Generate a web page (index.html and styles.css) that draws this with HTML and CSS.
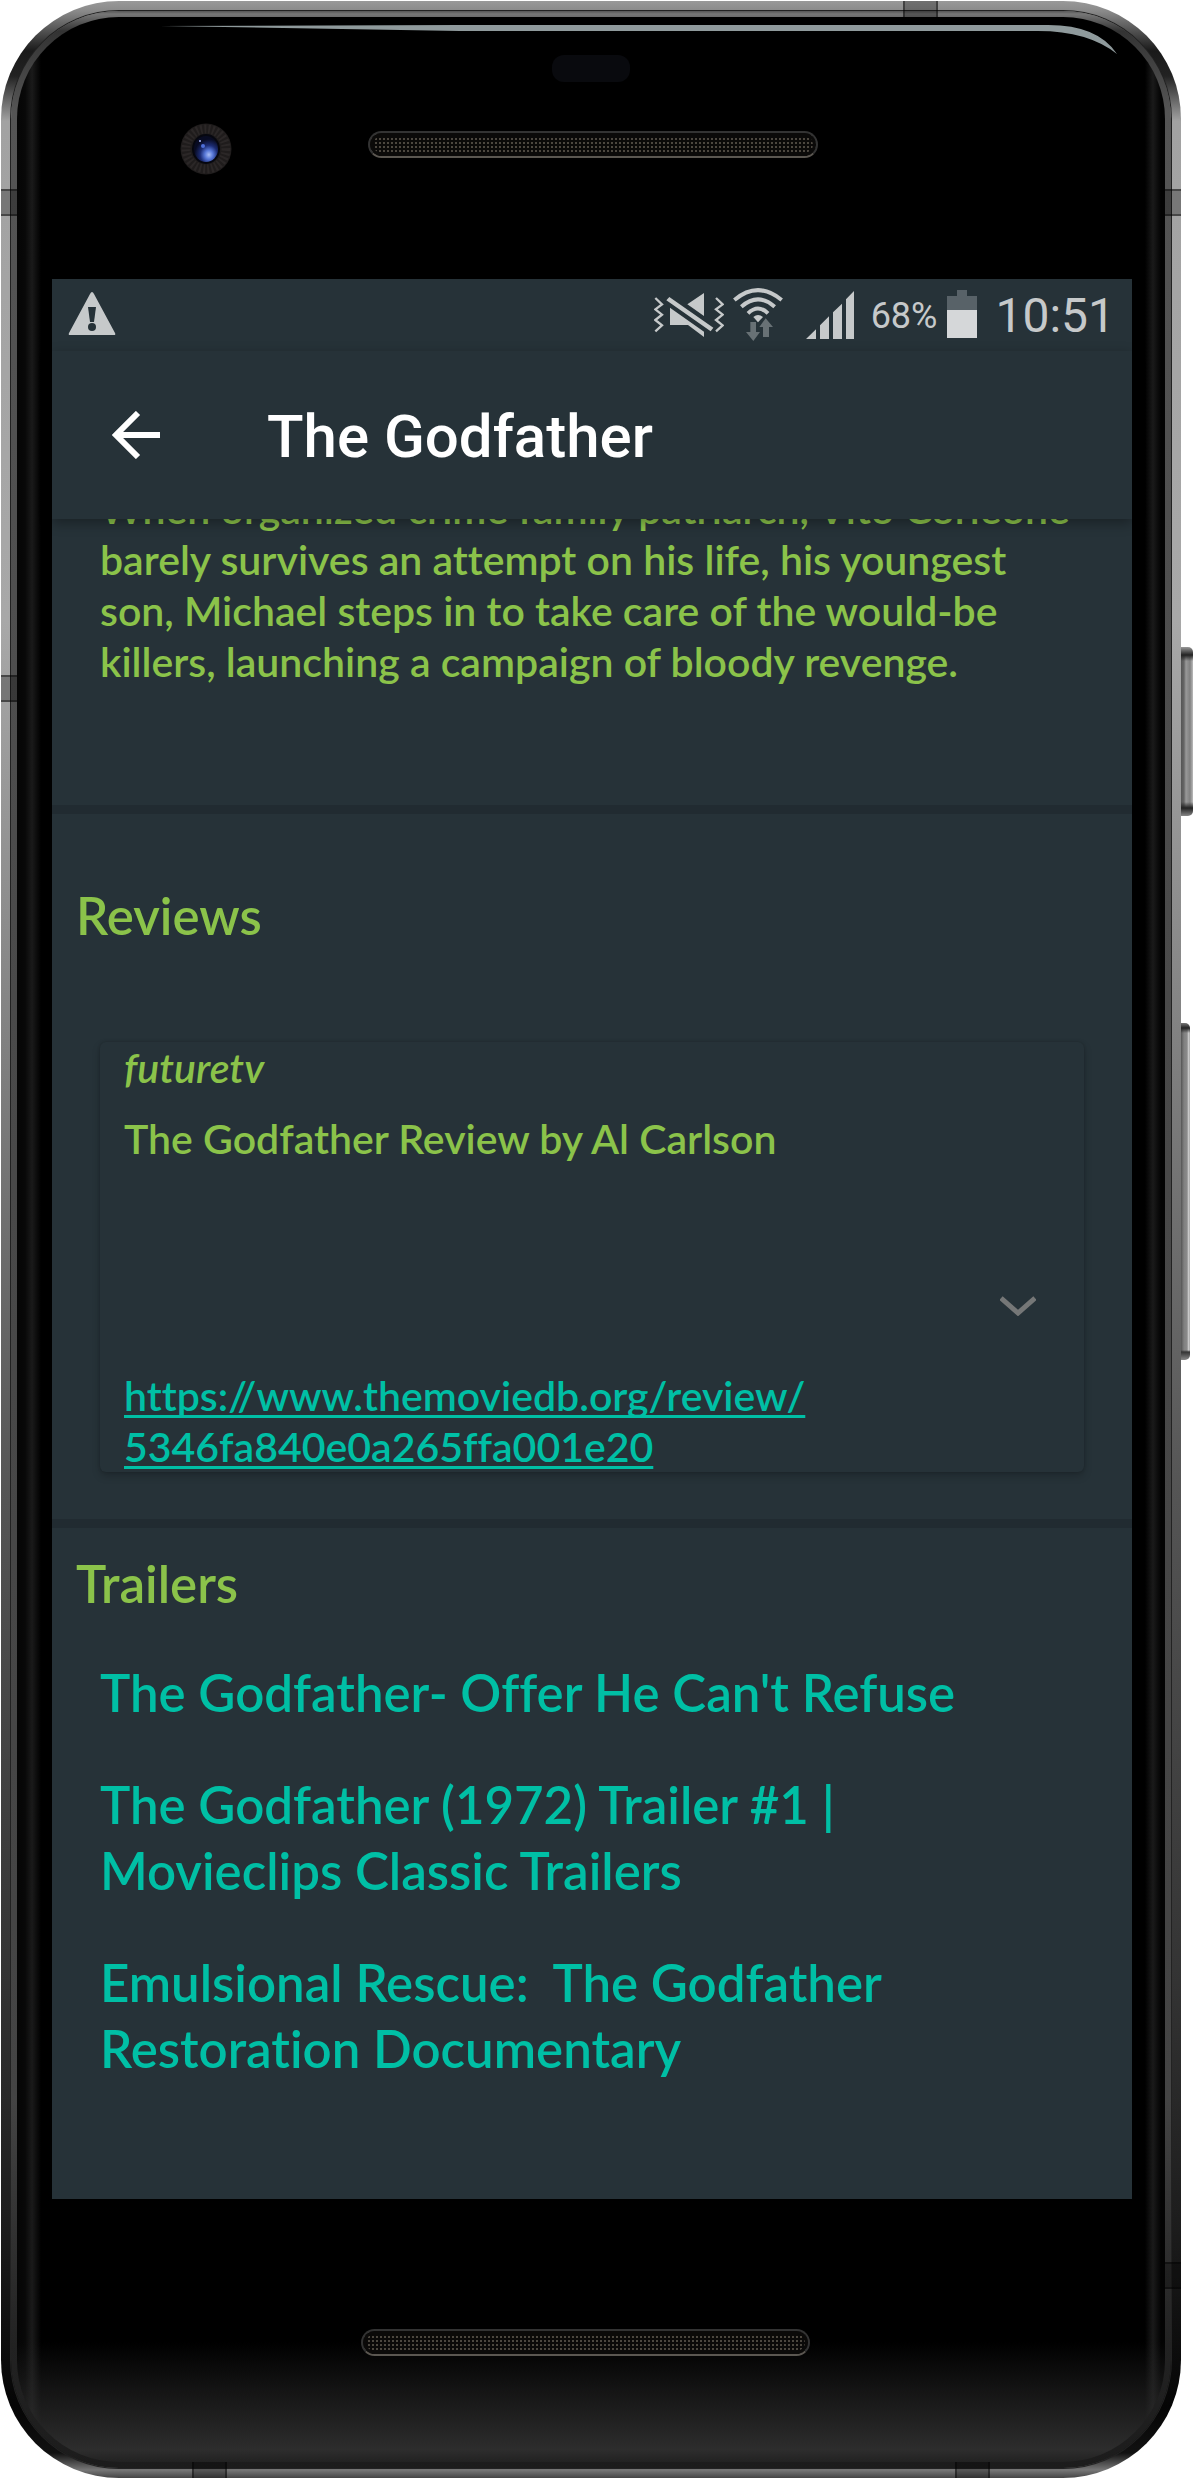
FILE: index.html
```
<!DOCTYPE html>
<html lang="en">
<head>
<meta charset="utf-8">
<meta name="viewport" content="width=device-width, initial-scale=1">
<title>The Godfather</title>
<link rel="stylesheet" href="styles.css">
</head>
<body>
<div class="device">
  <span class="band band-left band-high"></span>
  <span class="band band-left band-mid"></span>
  <span class="band band-right band-high"></span>
  <span class="band band-right band-low"></span>
  <span class="band band-top"></span>
  <span class="band band-bottom-left"></span>
  <span class="band band-bottom-right"></span>
  <span class="key key-power"></span>
  <span class="key key-volume"></span>
  <div class="rim">
    <div class="glass">
      <div class="bezel bezel-top">
        <svg class="glare" viewBox="0 0 960 30" preserveAspectRatio="none" aria-hidden="true"><path d="M0 1L300 0H890Q940 0 959 29Q930 6 880 6H300Z" fill="#8f9a9c"/></svg>
        <span class="sensor"></span>
        <svg class="camera" width="52" height="52" viewBox="0 0 52 52" aria-hidden="true">
          <defs><radialGradient id="lens" cx=".62" cy=".72" r=".6"><stop offset="0" stop-color="#a9bdf5"/><stop offset=".28" stop-color="#5878d8"/><stop offset=".6" stop-color="#1c2c74"/><stop offset="1" stop-color="#080b22"/></radialGradient></defs>
          <circle cx="26" cy="26" r="25.500" fill="#1f1c1c"/>
          <circle cx="26" cy="26" r="20" fill="none" stroke="#2b2727" stroke-width="9" stroke-dasharray="2 2"/>
          <ellipse cx="26" cy="26" rx="14" ry="15" fill="#06070f"/>
          <ellipse cx="26" cy="26" rx="12" ry="13" fill="url(#lens)"/>
          <circle cx="23" cy="23" r="2" fill="#4f6fd8"/><circle cx="20" cy="18" r="1" fill="#a7b8ff"/>
        </svg>
        <span class="speaker"></span>
      </div>
      <main class="screen">
        <div class="status">
          <svg class="warn" width="48" height="44" viewBox="0 0 48 44" aria-label="Warning"><path d="M24 0Q25 0 26 2L47 41Q48 43 46 43H2Q0 43 1 41L22 2Q23 0 24 0Z" fill="#c6c9ca"/><path d="M20 15H28L26 30H22Z" fill="#263238"/><circle cx="24" cy="35" r="4" fill="#263238"/></svg>
          <svg class="mute" width="70" height="55" viewBox="69 48 210 165" aria-label="Muted"><g fill="none" stroke="#c6c9ca" stroke-width="7"><path d="M73 81L93 100L73 115L93 131L73 147L93 163L73 181M255 81L275 100L255 115L275 131L255 147L275 163L255 181"/></g><g fill="#c6c9ca"><path d="M219 66V135L169 100ZM117 110L219 182V198L171 162H117ZM115 78L247 170L239 181L106 88Z"/></g></svg>
          <svg class="wifi" width="50" height="55" viewBox="306 48 150 165" aria-label="Wi-Fi"><g fill="none" stroke="#c6c9ca" stroke-width="12"><path d="M310 87Q381 28 452 87M331 107Q381 63 431 107M351 127Q381 98 411 127"/></g><path d="M367 138Q381 126 396 138L381 154Z" fill="#c6c9ca"/><path d="M358 153H375V183H387L367 210L345 183H358ZM396 198V168H385L404 142L426 168H414V198Z" fill="#687175"/></svg>
          <svg class="signal" width="49" height="55" viewBox="525 48 147 165" aria-label="Signal"><path d="M525 204L555 175V204ZM567 163L594 136V204H567ZM606 124L633 98V204H606ZM645 85L669 60V204H645Z" fill="#c6c9ca"/></svg>
          <span class="percent">68%</span>
          <svg class="battery" width="30" height="55" viewBox="951 48 90 165" aria-label="Battery"><path d="M981 57H1011V75H1041V117H951V75H981Z" fill="#586268"/><path d="M951 117H1041V201H951Z" fill="#d5d7d9"/></svg>
          <time class="clock">10:51</time>
        </div>
        <header class="appbar">
          <button class="back" type="button" aria-label="Back"><svg width="48" height="48" viewBox="0 0 48 48" aria-hidden="true"><path d="M26 2L4 24L26 46M3 24H48" fill="none" stroke="#fff" stroke-width="6"/></svg></button>
          <h1 class="title">The Godfather</h1>
        </header>
        <div class="scroller">
          <section class="overview">
            <p class="plot">When organized crime family patriarch, Vito Corleone barely survives an attempt on his life, his youngest son, Michael steps in to take care of the would-be killers, launching a campaign of bloody revenge.</p>
          </section>
          <section class="reviews">
            <h2 class="heading">Reviews</h2>
            <article class="card">
              <p class="author">futuretv</p>
              <p class="summary">The Godfather Review by Al Carlson</p>
              <button class="expand" type="button" aria-label="Expand review"><svg width="36" height="20" viewBox="0 0 36 20" aria-hidden="true"><path d="M1 2L18 17L35 2" fill="none" stroke="#757777" stroke-width="5"/></svg></button>
              <a class="source" href="https://www.themoviedb.org/review/5346fa840e0a265ffa001e20">https://www.themoviedb.org/review/<wbr>5346fa840e0a265ffa001e20</a>
            </article>
          </section>
          <section class="trailers">
            <h2 class="heading">Trailers</h2>
            <ul class="list">
              <li><a class="trailer" href="#">The Godfather- Offer He Can't Refuse</a></li>
              <li><a class="trailer" href="#">The Godfather (1972) Trailer #1 | Movieclips Classic Trailers</a></li>
              <li><a class="trailer" href="#">Emulsional Rescue:&nbsp; The Godfather Restoration Documentary</a></li>
            </ul>
          </section>
        </div>
      </main>
      <div class="bezel bezel-bottom"><span class="speaker"></span></div>
    </div>
  </div>
</div>
</body>
</html>
```
FILE: styles.css
```
* { box-sizing: border-box; }
body { margin: 0; background: #fff; font-family: Lato, "Noto Sans", sans-serif; font-variant-ligatures: none; }
h1, h2, p, ul { margin: 0; padding: 0; }
button { border: 0; padding: 0; background: none; display: flex; cursor: pointer; }
svg { display: block; flex: none; }

/* phone body */
.device {
  position: relative;
  margin: 1px 13px 2px 1px;
  padding: 10px;
  border-radius: 118px;
  background: linear-gradient(#999, #8a8a8a 10px, #1a1a1a 50px, #222 75px, #a2a2a2 120px, #a8a8a8 25%, #7a7a7a 45%, #555 60%, #333 80%, #1c1c1c 90%, #050505 calc(100% - 70px), #111 calc(100% - 25px), #777 calc(100% - 8px), #444);
}
.rim {
  padding: 6px;
  border-radius: 108px;
  background: linear-gradient(#555, #777 3px, #333 20px, #555 100px, #4a4a4a 40%, #444 85%, #222 95%, #1c1c1c);
  box-shadow: 0 0 0 1px #222;
}
.glass {
  display: flex;
  flex-direction: column;
  border-radius: 102px;
  overflow: hidden;
  background:
    linear-gradient(transparent calc(100% - 120px), #2d2d2d calc(100% - 12px), #222),
    linear-gradient(90deg, #050505, #080808 8px, #1a1a1a 15px, #000 24px, #000 calc(100% - 20px), #1a1a1a calc(100% - 12px), #030303 calc(100% - 4px));
}
.bezel { position: relative; }
.bezel-top { height: 262px; padding: 114px 347px 0 351px; }
.bezel-bottom { height: 263px; padding: 130px 355px 0 344px; }
.speaker {
  display: block;
  height: 27px;
  border: 2px solid #333;
  border-bottom-color: #5b5751;
  border-radius: 14px;
  background: radial-gradient(circle, #4c473f 1px, transparent 1px) 0 0 / 4px 4px, #0b0a09;
  box-shadow: inset 0 0 0 3px #0b0a09;
}
.glare { position: absolute; top: 8px; left: 143px; width: calc(100% - 190px); height: 30px; }
.sensor { position: absolute; top: 38px; left: 535px; width: 78px; height: 27px; border-radius: 12px; background: #090a0e; }
.camera { position: absolute; top: 106px; left: 163px; }

.band { position: absolute; background: #0004; border: solid #0006; border-width: 2px 0; }
.band-left, .band-right { width: 16px; height: 27px; }
.band-left { left: 0; }
.band-right { right: 0; }
.band-high { top: 188px; }
.band-mid { top: 674px; }
.band-low { bottom: 189px; }
.band-top, .band-bottom-left, .band-bottom-right { width: 35px; height: 16px; border-width: 0 2px; }
.band-top { top: 0; right: 243px; }
.band-bottom-left { bottom: 0; left: 191px; }
.band-bottom-right { bottom: 0; right: 191px; }
.key { position: absolute; border-radius: 0 5px 5px 0; }
.key-power { top: 646px; right: -12px; width: 12px; height: 169px; background: linear-gradient(#999, #222 8px, transparent 14px, transparent calc(100% - 14px), #222 calc(100% - 8px), #888), linear-gradient(90deg, #555, #666 3px, #999 5px, #808080 9px, #bbb); }
.key-volume { top: 1022px; right: -9px; width: 9px; height: 337px; background: linear-gradient(#777, #222 5px, transparent 10px, transparent calc(100% - 10px), #333 calc(100% - 8px), #888), linear-gradient(90deg, #555, #808080 3px, #8a8a8a 6px, #ddd 8px, #888); }

/* app screen */
.screen { margin: 0 33px 0 35px; background: #263238; color: #8bc34a; font-weight: 600; }
.status { display: flex; align-items: center; height: 72px; padding: 0 17px 2px 16px; color: #c6c9ca; font-family: Roboto, sans-serif; font-weight: 400; }
.warn { margin-right: auto; }
.wifi { margin-left: 9px; }
.signal { margin-left: 23px; }
.percent { padding-top: 3px; margin-left: 16px; font-size: 36px; line-height: 48px; }
.battery { margin-left: 10px; }
.clock { padding-top: 3px; margin-left: 18px; font-size: 48px; line-height: 48px; font-weight: 400; }
.appbar { position: relative; display: flex; align-items: center; height: 168px; padding-left: 60px; background: #263238; box-shadow: 0 4px 12px #0005; }
.title { padding-top: 4px; margin-left: 107px; color: #fff; font: 500 60px/72px Roboto, sans-serif; }
.scroller { overflow: hidden; }
.overview { padding: 0 48px 118px; border-bottom: 9px solid #212b31; }
.plot { margin-top: -36px; font-size: 41px; line-height: 51px; }
.heading { padding-left: 24px; font-size: 51px; line-height: 64px; font-weight: 600; }
.reviews { padding: 70px 0 47px; border-bottom: 9px solid #212b31; }
.card { display: flex; flex-direction: column; align-items: flex-start; margin: 94px 48px 0; padding: 0 24px; border-radius: 6px; font-size: 41px; line-height: 51px; box-shadow: 0 4px 8px #0003, 0 0 3px #0003; }
.author { font-style: italic; }
.summary { margin-top: 20px; }
.expand { align-self: flex-end; margin: 132px 24px 54px 0; }
.source { color: #00bfa5; text-decoration-thickness: 3px; text-underline-offset: 4px; text-decoration-skip-ink: none; }
.trailers { padding: 24px 0 117px; }
.list { display: flex; flex-direction: column; gap: 46px; margin: 44px 48px 0; list-style: none; }
.trailer { display: block; color: #00bfa5; font-size: 51px; line-height: 66px; text-decoration: none; }
```
